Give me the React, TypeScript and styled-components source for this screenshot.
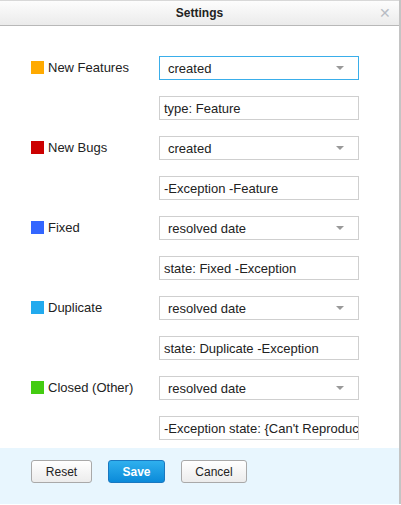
import React from "react";
import styled, { createGlobalStyle } from "styled-components";

const Global = createGlobalStyle`
  html, body { margin: 0; padding: 0; background: #fff; }
  body { font-family: "Liberation Sans", Arial, sans-serif; font-size: 13px; color: #222; }
`;

const Dialog = styled.div`
  width: 399px;
  height: 504px;
  border-right: 2px solid #c4c4c4;
  display: flex;
  flex-direction: column;
  background: #fff;
`;

const Header = styled.div`
  height: 24px;
  border-top: 1px solid #d8d8d8;
  border-bottom: 1px solid #b8b8b8;
  background: linear-gradient(#fdfdfd, #ebebeb);
  display: flex;
  align-items: center;
  justify-content: center;
  position: relative;
  font-weight: bold;
  font-size: 12px;
  color: #222;
`;

const Close = styled.span`
  position: absolute;
  right: 8px;
  top: 4px;
  font-size: 14px;
  color: #b8bcc4;
  font-weight: normal;
`;

const Body = styled.div`
  flex: 1;
  padding: 30px 0 0 31px;
  display: grid;
  grid-template-columns: 128px 200px;
  grid-auto-rows: 24px;
  row-gap: 16px;
  align-content: start;
`;

const Label = styled.div`
  display: flex;
  align-items: center;
  gap: 4px;
  padding-bottom: 2px;
  grid-column: 1;
`;

const Swatch = styled.span<{ $c: string }>`
  width: 13px;
  height: 13px;
  background: ${(p) => p.$c};
  display: inline-block;
`;

const Select = styled.div<{ $focus?: boolean }>`
  grid-column: 2;
  box-sizing: border-box;
  border: 1px solid ${(p) => (p.$focus ? "#3aaeea" : "#cfcfcf")};
  display: flex;
  align-items: center;
  justify-content: space-between;
  padding: 0 14px 0 8px;
  background: #fff;
`;

const Arrow = styled.span`
  width: 0;
  height: 0;
  border-left: 4px solid transparent;
  border-right: 4px solid transparent;
  border-top: 4px solid #999;
`;

const Input = styled.div`
  grid-column: 2;
  box-sizing: border-box;
  border: 1px solid #cfcfcf;
  display: flex;
  align-items: center;
  padding: 0 4px;
  white-space: nowrap;
  overflow: hidden;
`;

const Footer = styled.div`
  height: 56px;
  background: #e8f6fe;
  display: flex;
  align-items: flex-start;
  padding: 12px 0 0 31px;
  box-sizing: border-box;
  gap: 16px;
`;

const Button = styled.button<{ $primary?: boolean; $w: number }>`
  width: ${(p) => p.$w}px;
  height: 23px;
  box-sizing: border-box;
  border-radius: 3px;
  font-family: "Liberation Sans", Arial, sans-serif;
  font-size: 12px;
  padding: 0;
  cursor: pointer;
  ${(p) =>
    p.$primary
      ? `background: linear-gradient(#2fb0ee, #0b8ad9); border: 1px solid #1a78c0; color: #fff; font-weight: bold;`
      : `background: linear-gradient(#ffffff, #ececec); border: 1px solid #a9a9a9; color: #222;`}
`;

const rows = [
  { c: "#ffaa00", label: "New Features", sel: "created", q: "type: Feature", focus: true },
  { c: "#cc0000", label: "New Bugs", sel: "created", q: "-Exception -Feature" },
  { c: "#3366ff", label: "Fixed", sel: "resolved date", q: "state: Fixed -Exception" },
  { c: "#22aaee", label: "Duplicate", sel: "resolved date", q: "state: Duplicate -Exception" },
  { c: "#44cc11", label: "Closed (Other)", sel: "resolved date", q: "-Exception state: {Can't Reproduce}" },
];

export default function App() {
  return (
    <>
      <Global />
      <Dialog>
        <Header>
          Settings
          <Close>✕</Close>
        </Header>
        <Body>
          {rows.map((r) => (
            <React.Fragment key={r.label}>
              <Label>
                <Swatch $c={r.c} />
                {r.label}
              </Label>
              <Select $focus={r.focus}>
                {r.sel}
                <Arrow />
              </Select>
              <Input>{r.q}</Input>
            </React.Fragment>
          ))}
        </Body>
        <Footer>
          <Button $w={61}>Reset</Button>
          <Button $w={57} $primary>Save</Button>
          <Button $w={66}>Cancel</Button>
        </Footer>
      </Dialog>
    </>
  );
}
